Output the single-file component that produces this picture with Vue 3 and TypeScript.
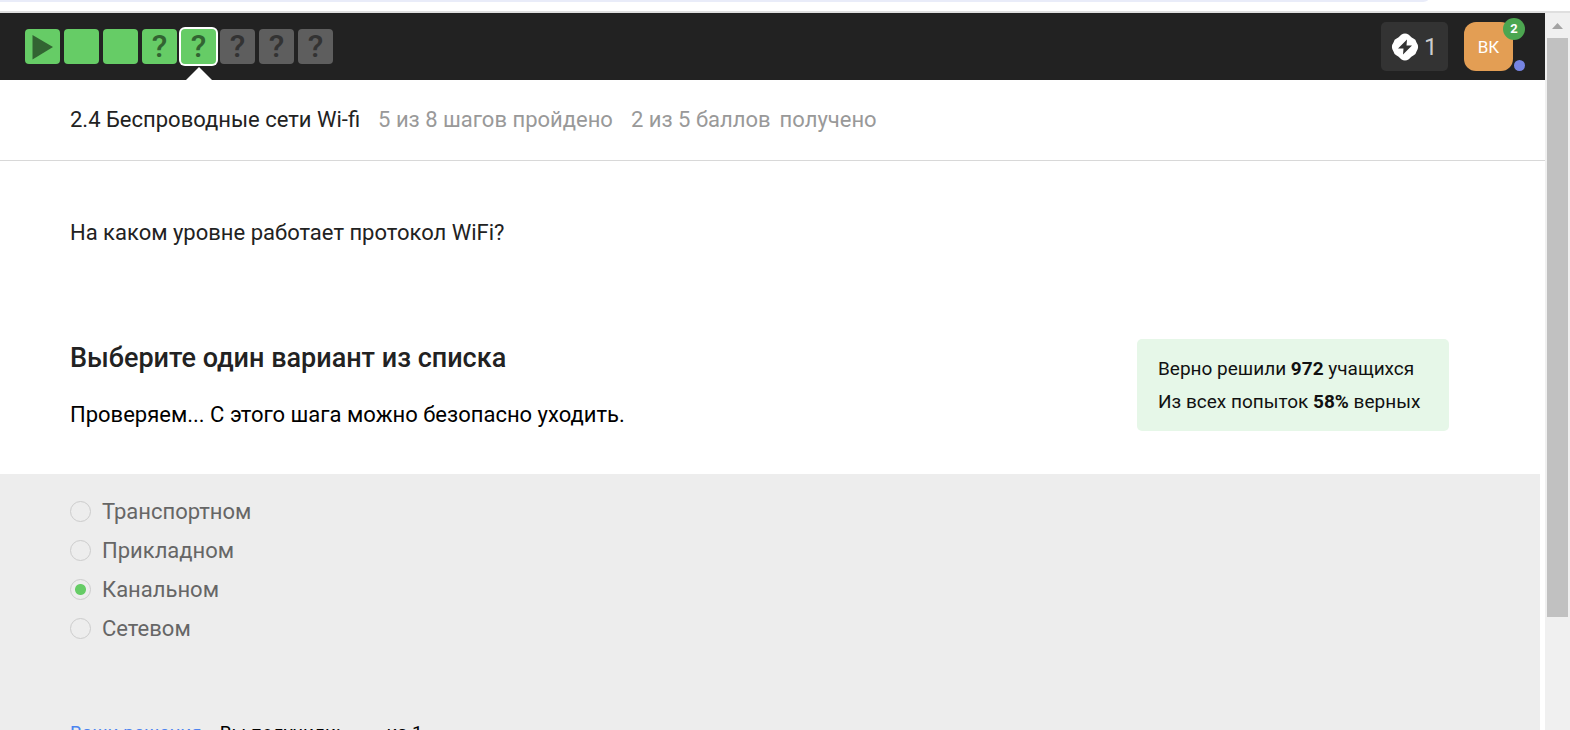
<script setup lang="ts">
import { ref } from 'vue'

type Step = { id: number; kind: 'video' | 'text' | 'quiz'; passed: boolean; label: string }

const steps: Step[] = [
  { id: 1, kind: 'video', passed: true, label: 'Шаг 1' },
  { id: 2, kind: 'text', passed: true, label: 'Шаг 2' },
  { id: 3, kind: 'text', passed: true, label: 'Шаг 3' },
  { id: 4, kind: 'quiz', passed: true, label: 'Шаг 4' },
  { id: 5, kind: 'quiz', passed: true, label: 'Шаг 5' },
  { id: 6, kind: 'quiz', passed: false, label: 'Шаг 6' },
  { id: 7, kind: 'quiz', passed: false, label: 'Шаг 7' },
  { id: 8, kind: 'quiz', passed: false, label: 'Шаг 8' },
]
const current = ref(5)

const options: string[] = ['Транспортном', 'Прикладном', 'Канальном', 'Сетевом']
const answer = ref('Канальном')
</script>

<template>
  <div class="window">
    <div class="chrome"><div class="chrome-fill"></div></div>
    <div class="viewport">
      <div class="page">
        <header class="topbar">
          <nav class="steps" aria-label="Шаги урока">
            <button
              v-for="step in steps"
              :key="step.id"
              type="button"
              class="step"
              :class="{ passed: step.passed, current: step.id === current }"
              :aria-label="step.label"
              @click="current = step.id"
            >
              <svg v-if="step.kind === 'video'" class="play" viewBox="0 0 35 35" aria-hidden="true">
                <path d="M7.500 6 L28 18 L7.500 30.500 Z" />
              </svg>
              <span v-else-if="step.kind === 'quiz'">?</span>
            </button>
          </nav>
          <div class="account">
            <button type="button" class="streak">
              <svg viewBox="0 0 28 28" aria-hidden="true">
                <path
                  class="gem"
                  d="M10.200 1.800 Q14 -.8 17.800 1.800 L19.600 3.600 Q20.600 4.600 22 5.200 Q25 6.300 25.400 9.200 Q28.800 14 25.400 18.800 Q25 21.700 22 22.800 Q20.600 23.400 19.600 24.400 L17.800 26.200 Q14 28.800 10.200 26.200 L8.400 24.400 Q7.400 23.400 6 22.800 Q3 21.700 2.600 18.800 Q-.8 14 2.600 9.200 Q3 6.300 6 5.200 Q7.400 4.600 8.400 3.600 Z"
                />
                <path class="bolt" d="M16 6.500 L7 15.500 L12.500 15.500 L12 21.500 L21 12.500 L15.500 12.500 Z" />
              </svg>
              <span>1</span>
            </button>
            <button type="button" class="avatar">
              ВК
              <span class="badge">2</span>
              <span class="dot"></span>
            </button>
          </div>
        </header>

        <div class="lesson">
          <h1>2.4 Беспроводные сети Wi-fi</h1>
          <span>5 из 8 шагов пройдено</span>
          <span class="points"><span>2 из 5 баллов</span><span>получено</span></span>
        </div>

        <main>
          <p class="question">На каком уровне работает протокол WiFi?</p>
          <section class="task">
            <div>
              <h2>Выберите один вариант из списка</h2>
              <p class="status">Проверяем... С этого шага можно безопасно уходить.</p>
            </div>
            <aside class="stats">
              <p>Верно решили <b>972</b> учащихся</p>
              <p>Из всех попыток <b>58%</b> верных</p>
            </aside>
          </section>
          <section class="answers">
            <div class="options" role="radiogroup" aria-label="Выберите один вариант из списка">
              <label v-for="option in options" :key="option">
                <input v-model="answer" type="radio" name="answer" :value="option" />
                <span>{{ option }}</span>
              </label>
            </div>
            <p class="result">
              <a href="#solutions">Ваши решения</a>
              <span>Вы получили:</span>
              <span class="max">из 1</span>
            </p>
          </section>
        </main>
      </div>
      <div class="scroll" aria-hidden="true">
        <svg viewBox="0 0 21 25"><path d="M5 16 L10.500 10 L16 16 Z" /></svg>
        <div class="thumb"></div>
        <div class="rest"></div>
      </div>
    </div>
  </div>
</template>

<style>
body {
  background: #fff;
}
</style>

<style scoped>
* {
  box-sizing: border-box;
}
.window {
  display: flex;
  flex-direction: column;
  height: 100vh;
  overflow: hidden;
  font-family: Roboto, 'Liberation Sans', sans-serif;
  font-size: 22px;
  color: #222;
}
h1,
h2,
p {
  margin: 0;
}
button {
  border: 0;
  padding: 0;
  font-family: inherit;
  cursor: pointer;
}
.chrome {
  flex: none;
  height: 13px;
  padding-right: 142px;
  border-bottom: 2px solid #dfdfdf;
}
.chrome-fill {
  height: 2px;
  background: #e9ecf9;
  border-bottom-right-radius: 8px 2px;
}
.viewport {
  flex: 1;
  min-height: 0;
  display: flex;
}
.page {
  flex: 1;
  min-width: 0;
  display: flex;
  flex-direction: column;
}
.topbar {
  flex: none;
  display: flex;
  justify-content: space-between;
  align-items: center;
  height: 67px;
  padding: 0 32px 0 25px;
  background: #222;
}
.steps {
  display: flex;
  gap: 4px;
}
.step {
  position: relative;
  width: 35px;
  height: 35px;
  border-radius: 4px;
  background: #5e5e5e;
  color: #333;
  font-size: 32px;
  font-weight: 500;
  line-height: 35px;
}
.step.passed {
  background: #66cc66;
  color: #326432;
}
.step.current {
  box-shadow: 0 0 0 2px #fff;
}
.step.current::after {
  content: '';
  position: absolute;
  top: 38px;
  left: 5px;
  border: 13px solid transparent;
  border-top: 0;
  border-bottom-color: #fff;
}
.play {
  display: block;
  fill: #326432;
}
.account {
  display: flex;
  gap: 16px;
}
.streak {
  display: flex;
  align-items: center;
  gap: 5px;
  width: 67px;
  height: 49px;
  padding-left: 10px;
  border-radius: 5px;
  background: #333;
  color: #ccc;
  font-size: 24px;
}
.streak svg {
  width: 28px;
  height: 28px;
}
.gem {
  fill: #fff;
}
.bolt {
  fill: #333;
}
.avatar {
  position: relative;
  width: 49px;
  height: 49px;
  border-radius: 12px;
  background: #e39e54;
  color: #fff;
  font-size: 17px;
}
.badge {
  position: absolute;
  top: -4px;
  right: -12px;
  width: 22px;
  height: 22px;
  border-radius: 50%;
  background: #4ca650;
  font-size: 13px;
  font-weight: 700;
  line-height: 22px;
}
.dot {
  position: absolute;
  right: -12px;
  bottom: 0;
  width: 11px;
  height: 11px;
  border-radius: 50%;
  background: #7684e2;
}
.lesson {
  flex: none;
  display: flex;
  align-items: center;
  gap: 18px;
  height: 81px;
  padding: 0 70px 2px;
  border-bottom: 1px solid #d8d8d8;
  color: #999;
}
.lesson h1 {
  font-size: 22px;
  font-weight: 400;
  color: #222;
}
.points {
  display: flex;
  gap: 9px;
}
main {
  flex: 1;
  min-height: 0;
  display: flex;
  flex-direction: column;
}
.question {
  padding: 55px 70px 0;
  line-height: 34px;
}
.task {
  display: flex;
  justify-content: space-between;
  align-items: flex-start;
  padding: 89px 96px 42px 70px;
}
.task h2 {
  font-size: 27px;
  font-weight: 500;
  line-height: 38px;
}
.status {
  margin-top: 21px;
  line-height: 34px;
  color: #000;
}
.stats {
  min-width: 312px;
  padding: 13px 21px;
  border-radius: 5px;
  background: #e6f7e8;
  color: #111;
  font-size: 19px;
  line-height: 33px;
}
.answers {
  flex: 1;
  min-height: 0;
  margin-right: 5px;
  padding: 18px 70px 0;
  background: #ededed;
}
.options label {
  display: flex;
  align-items: center;
  gap: 11px;
  width: fit-content;
  line-height: 39px;
  color: #666;
}
.options input {
  appearance: none;
  width: 21px;
  height: 21px;
  margin: 0;
  border: 1px solid #ccc;
  border-radius: 50%;
}
.options input:checked {
  background: radial-gradient(circle, #66cc66 5px, transparent 6px);
}
.result {
  display: flex;
  margin-top: 70px;
  color: #000;
  font-size: 19px;
  line-height: 30px;
}
.result a {
  margin-right: 18px;
  color: #4c84f0;
  text-decoration: none;
}
.result .max {
  margin-left: 46px;
}
.scroll {
  flex: none;
  display: flex;
  flex-direction: column;
  width: 25px;
  padding: 0 2px;
  background: #f0f0f0;
}
.scroll svg {
  flex: none;
  width: 21px;
  height: 25px;
  fill: #a3a3a3;
}
.thumb {
  flex: 579;
  background: #c1c1c1;
}
.rest {
  flex: 113;
}
</style>
